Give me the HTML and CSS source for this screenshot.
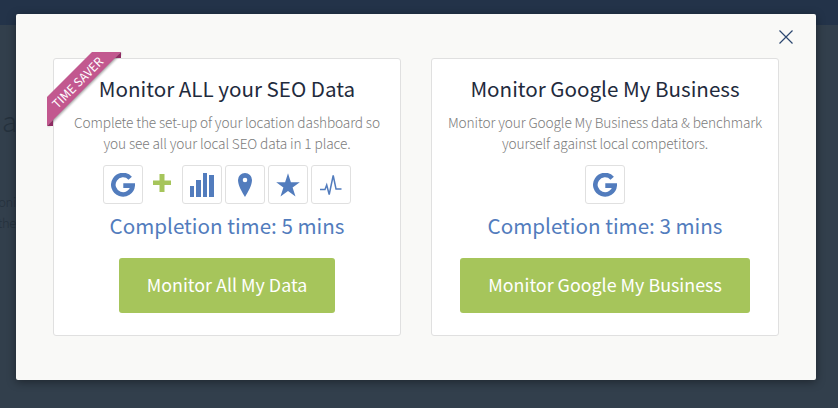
FILE: index.html
```html
<!DOCTYPE html>
<html lang="en">
<head>
    <meta charset="UTF-8">
    <meta name="viewport" content="width=device-width, initial-scale=1.0">
    <title>Monitor your SEO Data</title>
    <link rel="stylesheet" href="styles.css">
</head>
<body>
    <div class="page">
        <div class="topbar"></div>
        <div class="page-title">a</div>
        <div class="page-text"><span>oni</span><span>the</span></div>
    </div>

    <div class="modal">
        <button class="close" aria-label="Close">
            <svg width="14" height="14" viewBox="0 0 14 14"><path d="M.5.5l13 13M13.5.5l-13 13"/></svg>
        </button>

        <div class="card">
            <svg class="ribbon" width="76" height="76" viewBox="0 0 76 76">
                <path class="band" d="M45 0H74L0 74V45z"/>
                <path class="fold" d="M74 0v6h-6zM0 74h6v-6z"/>
                <text transform="translate(31 31) rotate(-45)" x="0" y="4">TIME SAVER</text>
            </svg>
            <h2>Monitor ALL your SEO Data</h2>
            <p>Complete the set-up of your location dashboard so<br>you see all your local SEO data in 1 place.</p>
            <div class="icons">
                <span class="tile"><svg viewBox="0 0 24 24"><path class="g" d="M19.2 5.2A9.7 9.7 0 1 0 21.7 12.6H12.3"/></svg></span>
                <span class="plus"><svg viewBox="0 0 20 20"><path d="M7.500 1h5v6.500h6.500v4.500h-6.500v7h-5v-7H1V7.500h6.500z"/></svg></span>
                <span class="tile"><svg viewBox="0 0 24 24"><path d="M0 13h4v11H0zM6 7h5v17H6zM13 0h4v24h-4zM19 2h5v22h-5z"/></svg></span>
                <span class="tile"><svg viewBox="0 0 24 24"><path fill-rule="evenodd" d="M12 0a7 7 0 0 0-7 7c0 5.500 4 12 7 17 3-5 7-11.500 7-17a7 7 0 0 0-7-7zm0 4.700a2.300 2.300 0 1 1 0 4.600 2.300 2.300 0 0 1 0-4.600z"/></svg></span>
                <span class="tile"><svg viewBox="0 0 24 24"><path d="M12 .3l2.900 8.900h8.900l-7.200 5.400 2.900 8.900-7.500-5.500-7.500 5.500 2.900-8.900L.2 9.200h8.900z"/></svg></span>
                <span class="tile"><svg viewBox="0 0 24 24"><path class="pulse" d="M1 16.500h5l1.700-4.500 2.500 9.500L14.200 2.500l2.800 13.500h5.500"/></svg></span>
            </div>
            <div class="time">Completion time: 5 mins</div>
            <button class="btn">Monitor All My Data</button>
        </div>

        <div class="card">
            <h2>Monitor Google My Business</h2>
            <p>Monitor your Google My Business data &amp; benchmark<br>yourself against local competitors.</p>
            <div class="icons">
                <span class="tile"><svg viewBox="0 0 24 24"><path class="g" d="M19.2 5.2A9.7 9.7 0 1 0 21.7 12.6H12.3"/></svg></span>
            </div>
            <div class="time">Completion time: 3 mins</div>
            <button class="btn">Monitor Google My Business</button>
        </div>
    </div>
</body>
</html>
```
FILE: styles.css
```css
* {
    box-sizing: border-box;
}
body {
    margin: 0;
    height: 408px;
    overflow: hidden;
    background: #323f4c;
    font-family: "Noto Sans CJK SC", "Open Sans", sans-serif;
}
button {
    border: 0;
    font-family: inherit;
    cursor: pointer;
}
/* page behind the modal */
.page {
    position: absolute;
    left: 0;
    top: 0;
    width: 100%;
    color: #25313d;
    font-weight: 300;
}
.topbar {
    height: 25px;
    background: #233349;
}
.page-title {
    margin: 77px 0 0 2px;
    font-size: 28px;
    line-height: 36px;
}
.page-text {
    display: flex;
    flex-direction: column;
    align-items: flex-end;
    width: 16px;
    margin-top: 53px;
    font-size: 13px;
    letter-spacing: -0.3px;
    line-height: 21px;
}
.modal {
    position: relative;
    display: flex;
    gap: 30px;
    width: 800px;
    height: 366px;
    margin: 14px 0 0 16px;
    padding: 44px 37px;
    border-radius: 2px;
    background: #f9f9f7;
    box-shadow: 0 2px 10px rgba(0, 0, 0, 0.4);
}
.close {
    position: absolute;
    top: 16px;
    right: 23.5px;
    padding: 0;
    width: 14px;
    height: 14px;
    background: none;
}
.close svg {
    display: block;
    fill: none;
    stroke: #2c4770;
    stroke-width: 1.2;
}
.card {
    position: relative;
    display: flex;
    flex-direction: column;
    align-items: center;
    width: 348px;
    height: 278px;
    padding-top: 13px;
    border: 1px solid #e0e0e0;
    border-radius: 3px;
    background: #fff;
    text-align: center;
}
.ribbon {
    position: absolute;
    left: -7px;
    top: -7px;
}
.ribbon .band {
    fill: #c2588f;
    filter: drop-shadow(1px 1px 1px rgba(0, 0, 0, 0.35));
}
.ribbon .fold {
    fill: #8e2c62;
}
.ribbon text {
    fill: #fff;
    font-size: 12px;
    text-anchor: middle;
}
h2 {
    margin: 0;
    color: #1f2b3d;
    font-size: 20.6px;
    font-weight: 400;
    line-height: 32px;
}
p {
    margin: 8px 0 0;
    color: #7b7b7b;
    font-size: 13.7px;
    font-weight: 300;
    letter-spacing: -0.12px;
    line-height: 21px;
    white-space: nowrap;
}
.icons {
    display: flex;
    gap: 3px;
    margin-top: 11px;
}
.tile, .plus {
    display: flex;
    align-items: center;
    justify-content: center;
    height: 39px;
}
.tile {
    width: 40px;
    border: 1px solid #e0e0e0;
    border-radius: 3px;
}
.tile svg {
    width: 24px;
    height: 24px;
    fill: #527cbd;
}
.tile .g {
    fill: none;
    stroke: #527cbd;
    stroke-width: 4.6;
}
.tile .pulse {
    fill: none;
    stroke: #527cbd;
    stroke-width: 1.5;
}
.plus {
    width: 33px;
    padding: 0 1px 3px 0;
}
.plus svg {
    width: 20px;
    height: 20px;
    fill: #a6c55b;
}
.time {
    margin-top: 5px;
    color: #527cbd;
    font-size: 20.6px;
    line-height: 32px;
}
.btn {
    height: 55px;
    margin-top: 17px;
    padding: 0 28px 2px;
    border-radius: 3px;
    background: #a6c55b;
    color: #fff;
    font-size: 17.87px;
    line-height: 53px;
    white-space: nowrap;
}
```
